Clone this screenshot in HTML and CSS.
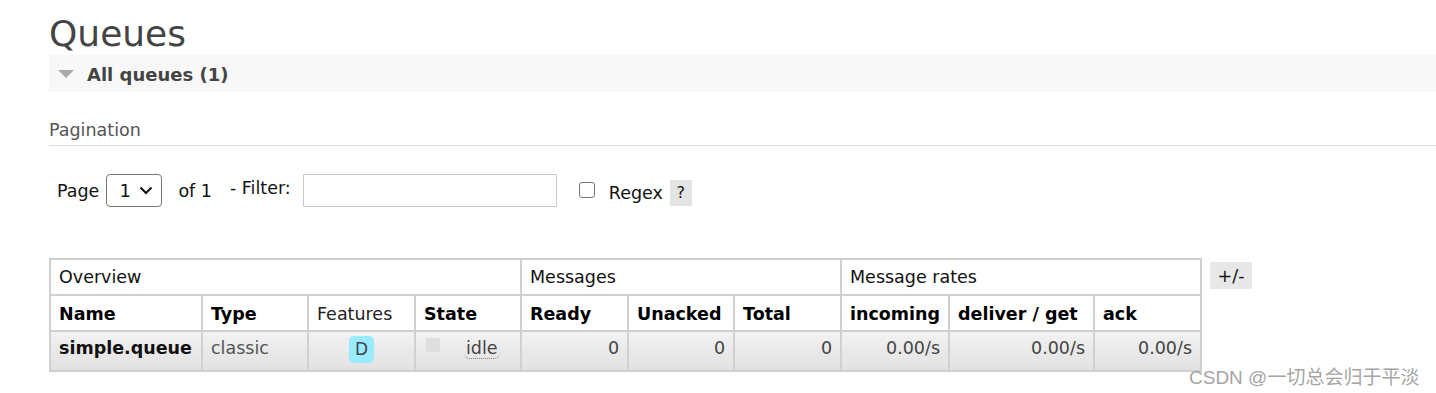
FILE: index.html
```html
<!DOCTYPE html>
<html lang="en">
<head>
    <meta charset="UTF-8">
    <meta name="viewport" content="width=device-width, initial-scale=1.0">
    <link rel="stylesheet" href="styles.css">
</head>
<body>
    <div class="page">
        <h1>Queues</h1>
        <div class="section-head">
            <span class="arrow"></span>
            <span>All queues (1)</span>
        </div>

        <div class="section-body">
            <h3 class="pagination-title">Pagination</h3>

            <div class="pager">
                <span class="page-label">Page</span>
                <div class="select">
                    <span>1</span>
                    <svg width="14" height="9" viewBox="0 0 14 9">
                        <path d="M1.5 1.5 L7 7 L12.5 1.5" fill="none" stroke="#111" stroke-width="2"/>
                    </svg>
                </div>
                <span class="of">of 1</span>
                <label class="filter-label" for="filter">- Filter:</label>
                <input class="filter" type="text" id="filter">
                <span class="check"></span>
                <span class="regex">Regex</span>
                <span class="help">?</span>
            </div>

            <div class="table-wrap">
                <table class="list">
                    <colgroup>
                        <col class="c-name">
                        <col class="c-type">
                        <col class="c-feat">
                        <col class="c-state">
                        <col class="c-num">
                        <col class="c-unacked">
                        <col class="c-num">
                        <col class="c-rate">
                        <col class="c-wide">
                        <col class="c-num">
                    </colgroup>
                    <thead>
                        <tr class="group">
                            <th colspan="4">Overview</th>
                            <th colspan="3">Messages</th>
                            <th colspan="3">Message rates</th>
                        </tr>
                        <tr class="cols">
                            <th>Name</th>
                            <th>Type</th>
                            <th class="plain">Features</th>
                            <th>State</th>
                            <th>Ready</th>
                            <th>Unacked</th>
                            <th>Total</th>
                            <th>incoming</th>
                            <th>deliver / get</th>
                            <th>ack</th>
                        </tr>
                    </thead>
                    <tbody>
                        <tr>
                            <td class="qname">simple.queue</td>
                            <td class="muted">classic</td>
                            <td class="center"><span class="badge">D</span></td>
                            <td><span class="state-box"></span><abbr class="state">idle</abbr></td>
                            <td class="r">0</td>
                            <td class="r">0</td>
                            <td class="r">0</td>
                            <td class="r">0.00/s</td>
                            <td class="r">0.00/s</td>
                            <td class="r">0.00/s</td>
                        </tr>
                    </tbody>
                </table>
                <span class="toggle">+/-</span>
            </div>
        </div>
    </div>

    <div class="watermark">CSDN @一切总会归于平淡</div>
</body>
</html>
```

FILE: styles.css
```css
* {
    box-sizing: border-box;
}
body {
    margin: 0;
    font-family: "DejaVu Sans", Verdana, sans-serif;
    font-size: 17.5px;
    color: #222;
    background-color: #fff;
}
.page {
    padding-left: 49px;
}
h1 {
    margin: 13px 0 0 0;
    font-size: 36px;
    line-height: 42px;
    font-weight: normal;
    color: #444;
}
.section-head {
    height: 37px;
    background-color: #f8f8f8;
    display: flex;
    align-items: center;
    padding-left: 9px;
    padding-top: 1px;
    font-weight: bold;
    font-size: 18px;
    color: #444;
}
.arrow {
    width: 0;
    height: 0;
    border-left: 8px solid transparent;
    border-right: 8px solid transparent;
    border-top: 8px solid #aaa;
    margin-right: 13px;
}
.pagination-title {
    margin: 28px 0 0 0;
    font-size: 17.5px;
    line-height: 20px;
    font-weight: normal;
    color: #555;
    padding-bottom: 5px;
    border-bottom: 1px solid #ddd;
}

/* Page / filter row */
.pager {
    display: flex;
    align-items: center;
    margin-top: 28px;
    padding-left: 8px;
    height: 33px;
    color: #111;
}
.select {
    display: flex;
    align-items: center;
    justify-content: space-between;
    width: 56px;
    height: 33px;
    margin-left: 7px;
    padding: 0 8px 0 12px;
    border: 1px solid #767676;
    border-radius: 4px;
    font-size: 18px;
}
.of {
    margin-left: 16px;
}
.filter-label {
    margin-left: 18px;
    margin-bottom: 5px;
}
.filter {
    width: 254px;
    height: 33px;
    margin-left: 12px;
    border: 1px solid #c8c8c8;
    border-radius: 1px;
}
.check {
    width: 16px;
    height: 16px;
    margin-left: 22px;
    margin-bottom: 1px;
    border: 1px solid #767676;
    border-radius: 3px;
}
.regex {
    margin-left: 14px;
    margin-top: 4px;
}
.help {
    width: 22px;
    height: 26px;
    margin-left: 7px;
    margin-top: 4px;
    background-color: #e4e4e4;
    display: flex;
    align-items: center;
    justify-content: center;
    font-size: 16px;
}

/* Queue table */
.table-wrap {
    display: flex;
    align-items: flex-start;
    margin-top: 51px;
}
table.list {
    border-collapse: collapse;
    border: 2px solid #d0d0d0;
    width: 1150px;
    table-layout: fixed;
}
col.c-name { width: 152px; }
col.c-type { width: 106px; }
col.c-feat { width: 107px; }
col.c-state { width: 106px; }
col.c-num { width: 107px; }
col.c-unacked { width: 106px; }
col.c-rate { width: 108px; }
col.c-wide { width: 145px; }
.list th,
.list td {
    border: 2px solid #d0d0d0;
    padding: 0 8px;
    text-align: left;
    white-space: nowrap;
}
.list tr.group th {
    height: 36px;
    font-weight: normal;
    color: #111;
}
.list tr.cols th {
    height: 36px;
    font-weight: bold;
    color: #000;
    padding-top: 2px;
}
.list tr.cols th.plain {
    font-weight: normal;
    color: #222;
}
.list tbody td {
    height: 40px;
    padding-bottom: 6px;
    background: linear-gradient(#f2f2f2, #e1e1e1);
    color: #444;
}
.list td.qname {
    font-weight: bold;
    color: #111;
}
.list td.muted {
    color: #555;
}
.list td.center {
    text-align: center;
}
.list td.r {
    text-align: right;
}
.badge {
    display: inline-block;
    width: 25px;
    height: 27px;
    line-height: 27px;
    margin-top: 2px;
    border-radius: 5px;
    background-color: #99ebff;
    color: #444;
    text-align: center;
    font-size: 17px;
}
.state-box {
    display: inline-block;
    width: 14px;
    height: 14px;
    background-color: #dedede;
    vertical-align: 2px;
    margin-left: 2px;
}
.state {
    margin-left: 24px;
    text-decoration: none;
    border-bottom: 1px dotted #777;
    border-radius: 0 0 6px 6px;
    padding: 0 2px;
    color: #444;
}
.toggle {
    margin: 4px 0 0 8px;
    width: 42px;
    height: 27px;
    background-color: #e8e8e8;
    display: flex;
    align-items: center;
    justify-content: center;
    color: #111;
}

/* Watermark over the table corner */
.watermark {
    position: absolute;
    left: 1189px;
    top: 362px;
    font-family: "Liberation Sans", "Noto Sans CJK SC", sans-serif;
    font-size: 19px;
    color: #a5a5a5;
    white-space: nowrap;
}
```
